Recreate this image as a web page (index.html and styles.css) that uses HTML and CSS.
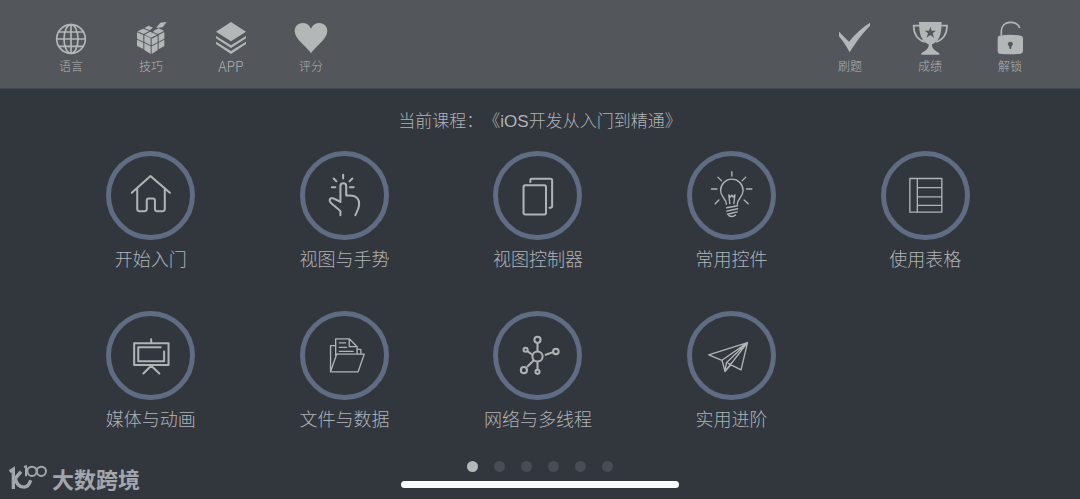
FILE: index.html
```
<!DOCTYPE html>
<html lang="zh-Hans">
<head>
  <meta charset="UTF-8">
  <meta name="viewport" content="width=device-width, initial-scale=1">
  <title>iOS开发从入门到精通</title>
  <link rel="stylesheet" href="styles.css">
</head>
<body>
  <header class="toolbar">
    <div class="tool-group">
      <button type="button" class="tool">
        <svg class="line" viewBox="0 0 108 108"><circle cx="54" cy="54" r="43"/><ellipse cx="54" cy="54" rx="21" ry="43"/><path d="M54 11V97M11 54H97M17 33H91M17 76H91"/></svg>
        <span>语言</span>
      </button>
      <button type="button" class="tool">
        <svg viewBox="0 0 108 108"><path d="M12 34L31 42V62L12 53ZM34 43L53 52V73L34 63ZM12 56L31 65V84L12 75ZM34 66L53 76V99L34 87ZM56 53L74 44V64L56 73ZM77 42L94 33V53L77 62ZM56 76L74 67V87L56 99ZM77 65L94 56V75L77 85ZM13 31L31 23L49 30L32 39ZM34 21L47 14L60 20L50 28ZM35 41L51 32L73 41L54 50ZM64 28L78 22L93 30L75 39L60 33ZM82 5L101 3L89 19L69 21Z"/></svg>
        <span>技巧</span>
      </button>
      <button type="button" class="tool">
        <svg viewBox="0 0 108 108"><path d="M54 3L99 32L54 61L9 32ZM9 45L54 73L99 45V52L54 81L9 52ZM9 62L54 90L99 62V69L54 99L9 69Z"/></svg>
        <span class="latin">APP</span>
      </button>
      <button type="button" class="tool">
        <svg viewBox="0 0 108 108"><path d="M54 97C42 77 5 55 5 30C5 4 42-4 54 23C66-4 103 4 103 30C103 55 66 77 54 97Z"/></svg>
        <span>评分</span>
      </button>
    </div>
    <div class="tool-group">
      <button type="button" class="tool">
        <svg viewBox="0 0 108 108"><path d="M21 32L51 62C70 38 92 18 114 5V15C93 34 72 64 53 94C43 76 32 59 21 46Z"/></svg>
        <span>刷题</span>
      </button>
      <button type="button" class="tool">
        <svg viewBox="0 0 108 108"><path fill-rule="evenodd" d="M21 3H89C89 43 80 62 60 70V76C63 85 70 90 82 97V101H28V97C40 90 47 85 50 76V70C30 62 21 43 21 3ZM55 17L51 29H38L48 37L44 50L55 42L66 50L62 37L72 29H59Z"/><path class="line" d="M22 14H5C5 38 15 55 38 63M88 14H105C105 38 95 55 72 63"/></svg>
        <span>成绩</span>
      </button>
      <button type="button" class="tool">
        <svg viewBox="0 0 108 108"><path fill-rule="evenodd" d="M22 44Q54 38 86 44Q93 45 93 52V90Q93 97 86 98Q54 102 22 98Q17 97 17 90V52Q17 45 22 44ZM55 62A7 7 0 0 0 51 75L53 84H57L59 75A7 7 0 0 0 55 62Z"/><path class="line" d="M28 44V30C28-3 76-3 83 21"/></svg>
        <span>解锁</span>
      </button>
    </div>
  </header>

  <main class="course">
    <h1 class="course-title">当前课程：《iOS开发从入门到精通》</h1>
    <nav class="chapters">
      <a href="#start" class="chapter">
        <svg class="bold" viewBox="0 0 144 144"><path d="M17 64L72 15L129 64M33 52V112Q33 118 39 118H55Q61 118 61 112V87Q61 81 67 81H79Q85 81 85 87V112Q85 118 91 118H108Q114 118 114 112V52"/></svg>
        <span>开始入门</span>
      </a>
      <a href="#gesture" class="chapter">
        <svg class="bold" viewBox="0 0 144 144"><path d="M68 11V22M40 22L48 30M95 22L87 30M35 48H45M88 48H99M60 130V118C48 106 32 96 29 89C26 79 38 78 45 83L60 91V45C60 33 77 33 77 45V72H88C108 72 116 84 115 98C115 110 108 120 104 130"/></svg>
        <span>视图与手势</span>
      </a>
      <a href="#controller" class="chapter">
        <svg class="bold" viewBox="0 0 144 144"><rect x="31" y="42" width="66" height="86" rx="5"/><path d="M51 32V27Q51 23 55 23H110Q115 23 115 28V103Q115 108 110 108H107"/></svg>
        <span>视图控制器</span>
      </a>
      <a href="#widgets" class="chapter">
        <svg viewBox="0 0 144 144"><path d="M73 2V15M32 18L43 29M114 18L103 29M13 53H29M116 53H132M35 85L24 96M109 85L121 96M57 98C57 80 40 78 40 57A33 33 0 0 1 106 57C106 78 89 80 89 98M67 96L64 70L69 77L73 71L77 77L82 70L79 96M58 108L90 102M58 118L90 111M60 127L89 120M64 131Q75 137 84 129"/></svg>
        <span>常用控件</span>
      </a>
      <a href="#table" class="chapter">
        <svg viewBox="0 0 144 144"><path d="M26 22H120V121H26ZM48 22V121M48 49H120M48 76H120M48 101H120"/></svg>
        <span>使用表格</span>
      </a>
      <a href="#media" class="chapter">
        <svg class="bold" viewBox="0 0 144 144"><path d="M24 36H125V100H24ZM102 48H36V89H112V60M74 24V36M51 125L74 102L98 125"/></svg>
        <span>媒体与动画</span>
      </a>
      <a href="#files" class="chapter">
        <svg viewBox="0 0 144 144"><path d="M46 43H31V120L49 68H130L112 120H31M46 73V23H86L109 46V68M86 23V46H109M57 35H75M57 48H78M57 60H97M109 54H120V68"/></svg>
        <span>文件与数据</span>
      </a>
      <a href="#network" class="chapter">
        <svg class="bold" viewBox="0 0 144 144"><circle cx="72" cy="75" r="15"/><circle cx="72" cy="26" r="9"/><circle cx="37" cy="55" r="6"/><circle cx="126" cy="60" r="8"/><circle cx="32" cy="115" r="9"/><circle cx="72" cy="120" r="6"/><path d="M72 36V58M43 60L56 69M118 62L96 70M43 104L59 88M72 94V113"/></svg>
        <span>网络与多线程</span>
      </a>
      <a href="#advanced" class="chapter">
        <svg viewBox="0 0 144 144"><path d="M119 34L5 70L44 86ZM44 86L53 119L119 34L100 114L62 95M119 34L57 93L53 119L70 99"/></svg>
        <span>实用进阶</span>
      </a>
    </nav>
    <div class="pager">
      <button type="button" class="dot active" aria-label="第1页"></button>
      <button type="button" class="dot" aria-label="第2页"></button>
      <button type="button" class="dot" aria-label="第3页"></button>
      <button type="button" class="dot" aria-label="第4页"></button>
      <button type="button" class="dot" aria-label="第5页"></button>
      <button type="button" class="dot" aria-label="第6页"></button>
    </div>
    <div class="home-bar"></div>
  </main>

  <div class="watermark">
    <svg viewBox="0 0 114 78"><path stroke-width="10" d="M2 20L13 13V72M36 20L19 40C25 70 56 77 65 46"/><path stroke-width="6" d="M45 6L51 4V34"/><circle stroke-width="6" cx="69" cy="19" r="14"/><circle stroke-width="6" cx="97" cy="19" r="14"/></svg>
    <span>大数跨境</span>
  </div>
</body>
</html>
```
FILE: styles.css
```
* {
  box-sizing: border-box;
}
body {
  margin: 0;
  min-height: 100vh;
  display: flex;
  flex-direction: column;
  background: #32373e;
  color: #b0b3b6;
  font-family: "Liberation Sans", "Noto Sans CJK SC", sans-serif;
}
button {
  padding: 0;
  border: none;
  background: none;
  color: inherit;
  font-family: inherit;
  cursor: pointer;
}
.toolbar {
  display: flex;
  justify-content: space-between;
  padding: 21px 30px 13px 31px;
  background: #53575b;
  border-bottom: 1px solid #414953;
}
.tool-group {
  display: flex;
}
.tool {
  width: 80px;
  display: flex;
  flex-direction: column;
  align-items: center;
  font-family: "Noto Sans CJK SC", sans-serif;
  font-size: 12px;
  font-weight: 300;
  line-height: 18px;
}
.tool .latin {
  font-size: 14px;
}
.tool svg {
  width: 36px;
  height: 36px;
  fill: #b4b7b8;
  overflow: visible;
}
.tool .line {
  fill: none;
  stroke: #b4b7b8;
  stroke-width: 5;
}
.course {
  flex: 1;
  display: flex;
  flex-direction: column;
}
.course-title {
  margin: 20px 0 16px;
  font-size: 17px;
  font-weight: 300;
  line-height: 26px;
  text-align: center;
  text-spacing-trim: space-all;
}
.chapters {
  display: grid;
  grid-template-columns: repeat(5, 1fr);
  row-gap: 40px;
  padding: 0 58px 0 54px;
}
.chapter {
  display: flex;
  flex-direction: column;
  align-items: center;
  gap: 5px;
  color: inherit;
  font-family: "Noto Sans CJK SC", sans-serif;
  font-size: 18px;
  font-weight: 300;
  line-height: 26px;
  text-decoration: none;
}
.chapter svg {
  width: 89px;
  height: 89px;
  padding: 15px;
  border: 5px solid #5f6c84;
  border-radius: 50%;
  fill: none;
  stroke: #b0b3b5;
  stroke-width: 4;
  stroke-linecap: round;
  stroke-linejoin: round;
}
.chapter svg.bold {
  stroke-width: 6;
}
.pager {
  display: flex;
  justify-content: center;
  gap: 16px;
  margin-top: auto;
}
.dot {
  width: 11px;
  height: 11px;
  border-radius: 50%;
  background: #484c55;
}
.dot.active {
  background: #b4b8b9;
}
.home-bar {
  width: 278px;
  height: 7px;
  margin: 9px auto 11px;
  border-radius: 4px;
  background: #fafdfd;
}
.watermark {
  position: absolute;
  left: 9px;
  bottom: 6px;
  display: flex;
  align-items: center;
  gap: 5px;
  color: #a3a6aa;
  font-family: "Noto Sans CJK SC", sans-serif;
  font-size: 22px;
  font-weight: 700;
  line-height: 30px;
}
.watermark svg {
  width: 38px;
  height: 26px;
  fill: none;
  stroke: #a3a6aa;
}
```
